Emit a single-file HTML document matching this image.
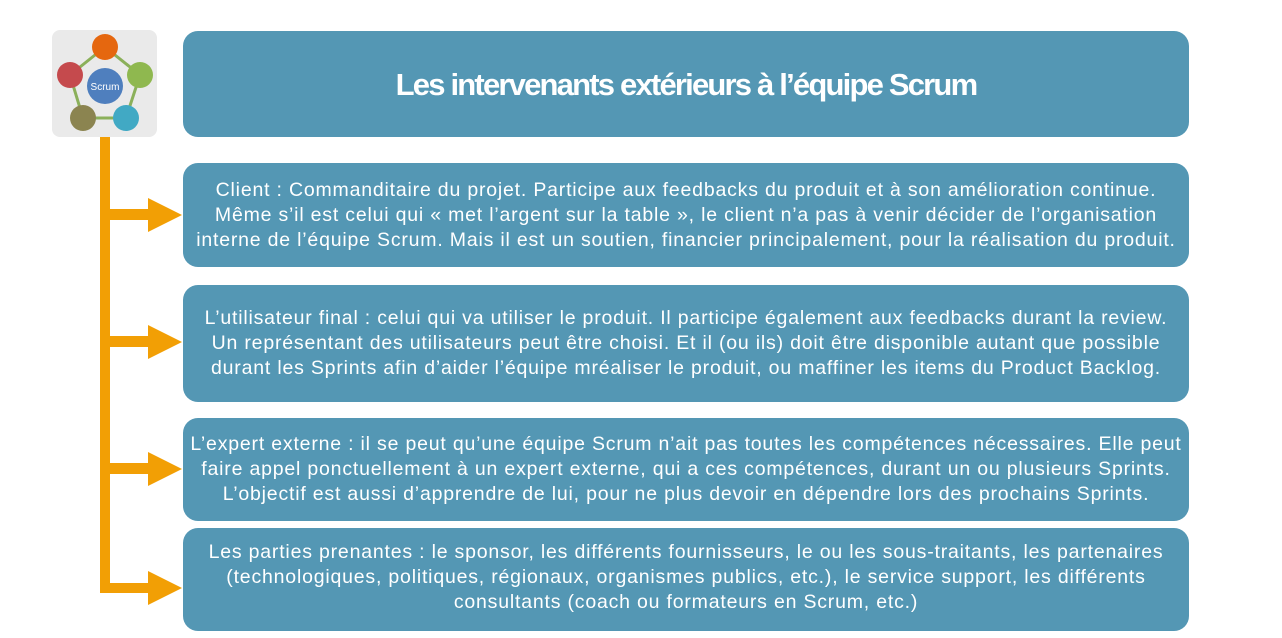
<!DOCTYPE html>
<html><head><meta charset="utf-8"><style>
body{margin:0;width:1282px;height:638px;background:#fff;position:relative;overflow:hidden;font-family:"Liberation Sans",sans-serif}
.b{position:absolute;left:183px;width:1006px;background:#5497b4;border-radius:15px;color:#fff;display:flex;align-items:center;justify-content:center;text-align:center;font-size:19.5px;line-height:25px;letter-spacing:0.8px;white-space:nowrap}
.o{position:absolute;background:#f29f05}
.t{position:absolute;width:0;height:0;border-top:17px solid transparent;border-bottom:17px solid transparent;border-left:34px solid #f29f05;left:148px}
</style></head><body>
<div style="position:absolute;left:52px;top:30px;width:105px;height:107px;background:#eaeaea;border-radius:8px">
<svg width="105" height="107" viewBox="0 0 105 107">
<polygon points="53,17 88,45 74,88 31,88 18,45" fill="none" stroke="#8bb05a" stroke-width="3"/>
<circle cx="53" cy="17" r="13" fill="#e5670f"/>
<circle cx="88" cy="45" r="13" fill="#8fb84f"/>
<circle cx="74" cy="88" r="13" fill="#41a9c4"/>
<circle cx="31" cy="88" r="13" fill="#8b8450"/>
<circle cx="18" cy="45" r="13" fill="#c54a4d"/>
<circle cx="53" cy="56" r="18" fill="#4f7fbe"/>
<text x="53" y="60" font-size="10" fill="#fff" text-anchor="middle" font-family="Liberation Sans">Scrum</text>
</svg></div>
<div class="o" style="left:100px;top:137px;width:10px;height:456px;border-radius:0 0 0 3px"></div>
<div class="o" style="left:100px;top:209px;width:50px;height:11px"></div>
<div class="o" style="left:100px;top:336px;width:50px;height:11px"></div>
<div class="o" style="left:100px;top:463px;width:50px;height:11px"></div>
<div class="o" style="left:100px;top:583px;width:50px;height:10px"></div>
<div class="t" style="top:198px"></div>
<div class="t" style="top:325px"></div>
<div class="t" style="top:452px"></div>
<div class="t" style="top:571px"></div>
<div class="b" style="top:31px;height:106px;font-size:31px;font-weight:bold;letter-spacing:-1.8px">Les intervenants extérieurs à l’équipe Scrum</div>
<div class="b" style="top:163px;height:104px">Client : Commanditaire du projet. Participe aux feedbacks du produit et à son amélioration continue.<br>Même s’il est celui qui « met l’argent sur la table », le client n’a pas à venir décider de l’organisation<br>interne de l’équipe Scrum. Mais il est un soutien, financier principalement, pour la réalisation du produit.</div>
<div class="b" style="top:285px;height:117px">L’utilisateur final : celui qui va utiliser le produit. Il participe également aux feedbacks durant la review.<br>Un représentant des utilisateurs peut être choisi. Et il (ou ils) doit être disponible autant que possible<br>durant les Sprints afin d’aider l’équipe mréaliser le produit, ou maffiner les items du Product Backlog.</div>
<div class="b" style="top:418px;height:103px">L’expert externe : il se peut qu’une équipe Scrum n’ait pas toutes les compétences nécessaires. Elle peut<br>faire appel ponctuellement à un expert externe, qui a ces compétences, durant un ou plusieurs Sprints.<br>L’objectif est aussi d’apprendre de lui, pour ne plus devoir en dépendre lors des prochains Sprints.</div>
<div class="b" style="top:528px;height:103px;align-items:flex-start;padding-top:12px;box-sizing:border-box">Les parties prenantes : le sponsor, les différents fournisseurs, le ou les sous-traitants, les partenaires<br>(technologiques, politiques, régionaux, organismes publics, etc.), le service support, les différents<br>consultants (coach ou formateurs en Scrum, etc.)</div>
</body></html>
